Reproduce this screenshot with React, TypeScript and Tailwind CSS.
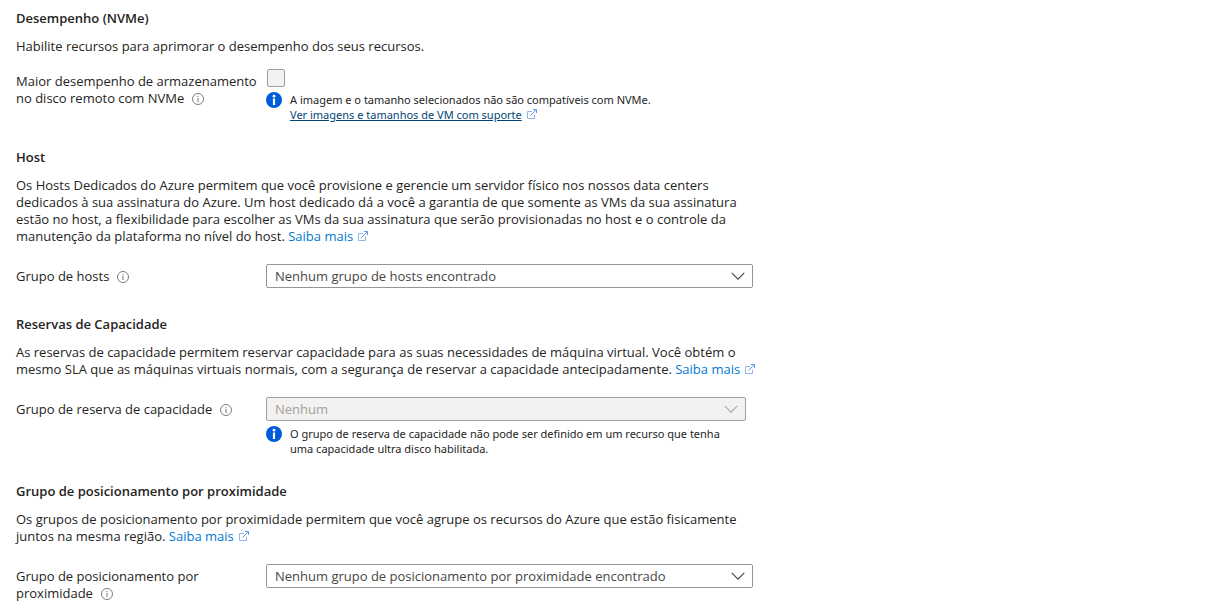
import { useId, type ReactNode } from "react";

function InfoOutline({ label }: { label: string }) {
  return (
    <button type="button" aria-label={label} className="ml-2 inline-block size-3 align-[-2px]">
      <svg viewBox="0 0 12 12" className="size-3" fill="none" aria-hidden="true">
        <circle cx="6" cy="6" r="5.5" stroke="#7c7c7c" strokeWidth="1" />
        <path d="M6 5v4" stroke="#8a8a8a" strokeWidth="1.2" />
        <path d="M6 3v1.2" stroke="#8a8a8a" strokeWidth="1.2" />
      </svg>
    </button>
  );
}

function InfoSolid() {
  return (
    <svg viewBox="0 0 16 16" className="size-4 shrink-0" aria-hidden="true">
      <circle cx="8" cy="8" r="8" fill="#015cda" />
      <path d="M6.9 6.5h2.2V13H6.9z" fill="#fff" />
      <circle cx="8" cy="4.2" r="1.4" fill="#fff" />
    </svg>
  );
}

function ExternalIcon() {
  return (
    <svg viewBox="0 0 11 11" className="ml-1 inline-block size-[11px] align-[-1px]" fill="none" aria-hidden="true">
      <path d="M6 2.5H1.5v7h7V5.5" stroke="#8fb4ee" />
      <path d="M4.5 6.5 9.8 1.2" stroke="#5b93e8" />
      <path d="M7 .5h3.5V4" stroke="#5b93e8" />
    </svg>
  );
}

function LearnMore() {
  return (
    <a href="#saiba-mais" className="whitespace-nowrap text-[#0078d4]">
      Saiba mais
      <ExternalIcon />
    </a>
  );
}

function Section({ title, intro, children }: { title: string; intro: ReactNode; children: ReactNode }) {
  return (
    <section>
      <h2 className="font-semibold">{title}</h2>
      <p className="mt-[11px]">{intro}</p>
      {children}
    </section>
  );
}

function Message({ children }: { children: ReactNode }) {
  return (
    <div className="mt-[5px] -mb-px flex gap-2">
      <InfoSolid />
      <p className="font-['Noto_Sans','Open_Sans',sans-serif] text-[11px] leading-[15px]">{children}</p>
    </div>
  );
}

type SelectFieldProps = {
  label: ReactNode;
  info: string;
  value: string;
  disabled?: boolean;
  children?: ReactNode;
};

function SelectField({ label, info, value, disabled, children }: SelectFieldProps) {
  const id = useId();
  return (
    <div className="mt-[19px] flex items-start">
      <div className="w-[250px] shrink-0 pt-1">
        <label htmlFor={id}>{label}</label>
        <InfoOutline label={info} />
      </div>
      <div className={disabled ? "w-full max-w-[480px]" : "w-full max-w-[487px]"}>
        <div className="grid items-center">
          <select
            id={id}
            disabled={disabled}
            className="col-start-1 row-start-1 h-6 w-full appearance-none rounded-xs border border-[#979593] bg-white px-2 text-[#484644] disabled:border-[#a19f9d] disabled:bg-[#f3f2f1] disabled:text-[#a19f9d] disabled:opacity-100"
          >
            <option>{value}</option>
          </select>
          <svg
            viewBox="0 0 14 8"
            className={`pointer-events-none col-start-1 row-start-1 mr-2 h-2 w-[14px] justify-self-end ${disabled ? "text-[#a8a8a8]" : "text-[#444444]"}`}
            fill="none"
            aria-hidden="true"
          >
            <path d="M.7.9 7 7.2 13.3.9" stroke="currentColor" strokeWidth="1.1" />
          </svg>
        </div>
        {children}
      </div>
    </div>
  );
}

export default function App() {
  return (
    <main className="flex flex-col gap-7 px-4 pt-[10px] font-['Open_Sans','Noto_Sans',sans-serif] text-[13px] leading-[17px] text-[#252423]">
      <Section title="Desempenho (NVMe)" intro="Habilite recursos para aprimorar o desempenho dos seus recursos.">
        <div className="mt-[14px] flex items-start">
          <div className="w-[250px] shrink-0 pt-1">
            <label htmlFor="nvme">
              Maior desempenho de armazenamento
              <br />
              no disco remoto com NVMe
            </label>
            <InfoOutline label="Informações sobre NVMe" />
          </div>
          <div>
            <input
              id="nvme"
              type="checkbox"
              disabled
              className="ml-px block size-[18px] appearance-none rounded-xs border border-[#a19f9d] bg-[#f3f2f1]"
            />
            <Message>
              A imagem e o tamanho selecionados não são compatíveis com NVMe.
              <br />
              <a href="#imagens" className="text-[#004578] underline">
                Ver imagens e tamanhos de VM com suporte
              </a>
              <ExternalIcon />
            </Message>
          </div>
        </div>
      </Section>

      <Section
        title="Host"
        intro={
          <>
            Os Hosts Dedicados do Azure permitem que você provisione e gerencie um servidor físico nos nossos data centers
            <br />
            dedicados à sua assinatura do Azure. Um host dedicado dá a você a garantia de que somente as VMs da sua assinatura
            <br />
            estão no host, a flexibilidade para escolher as VMs da sua assinatura que serão provisionadas no host e o controle da
            <br />
            manutenção da plataforma no nível do host. <LearnMore />
          </>
        }
      >
        <SelectField label="Grupo de hosts" info="Informações sobre grupo de hosts" value="Nenhum grupo de hosts encontrado" />
      </Section>

      <Section
        title="Reservas de Capacidade"
        intro={
          <>
            As reservas de capacidade permitem reservar capacidade para as suas necessidades de máquina virtual. Você obtém o
            <br />
            mesmo SLA que as máquinas virtuais normais, com a segurança de reservar a capacidade antecipadamente. <LearnMore />
          </>
        }
      >
        <SelectField
          label="Grupo de reserva de capacidade"
          info="Informações sobre grupo de reserva de capacidade"
          value="Nenhum"
          disabled
        >
          <Message>
            O grupo de reserva de capacidade não pode ser definido em um recurso que tenha
            <br />
            uma capacidade ultra disco habilitada.
          </Message>
        </SelectField>
      </Section>

      <Section
        title="Grupo de posicionamento por proximidade"
        intro={
          <>
            Os grupos de posicionamento por proximidade permitem que você agrupe os recursos do Azure que estão fisicamente
            <br />
            juntos na mesma região. <LearnMore />
          </>
        }
      >
        <SelectField
          label={
            <>
              Grupo de posicionamento por
              <br />
              proximidade
            </>
          }
          info="Informações sobre grupo de posicionamento por proximidade"
          value="Nenhum grupo de posicionamento por proximidade encontrado"
        />
      </Section>
    </main>
  );
}
